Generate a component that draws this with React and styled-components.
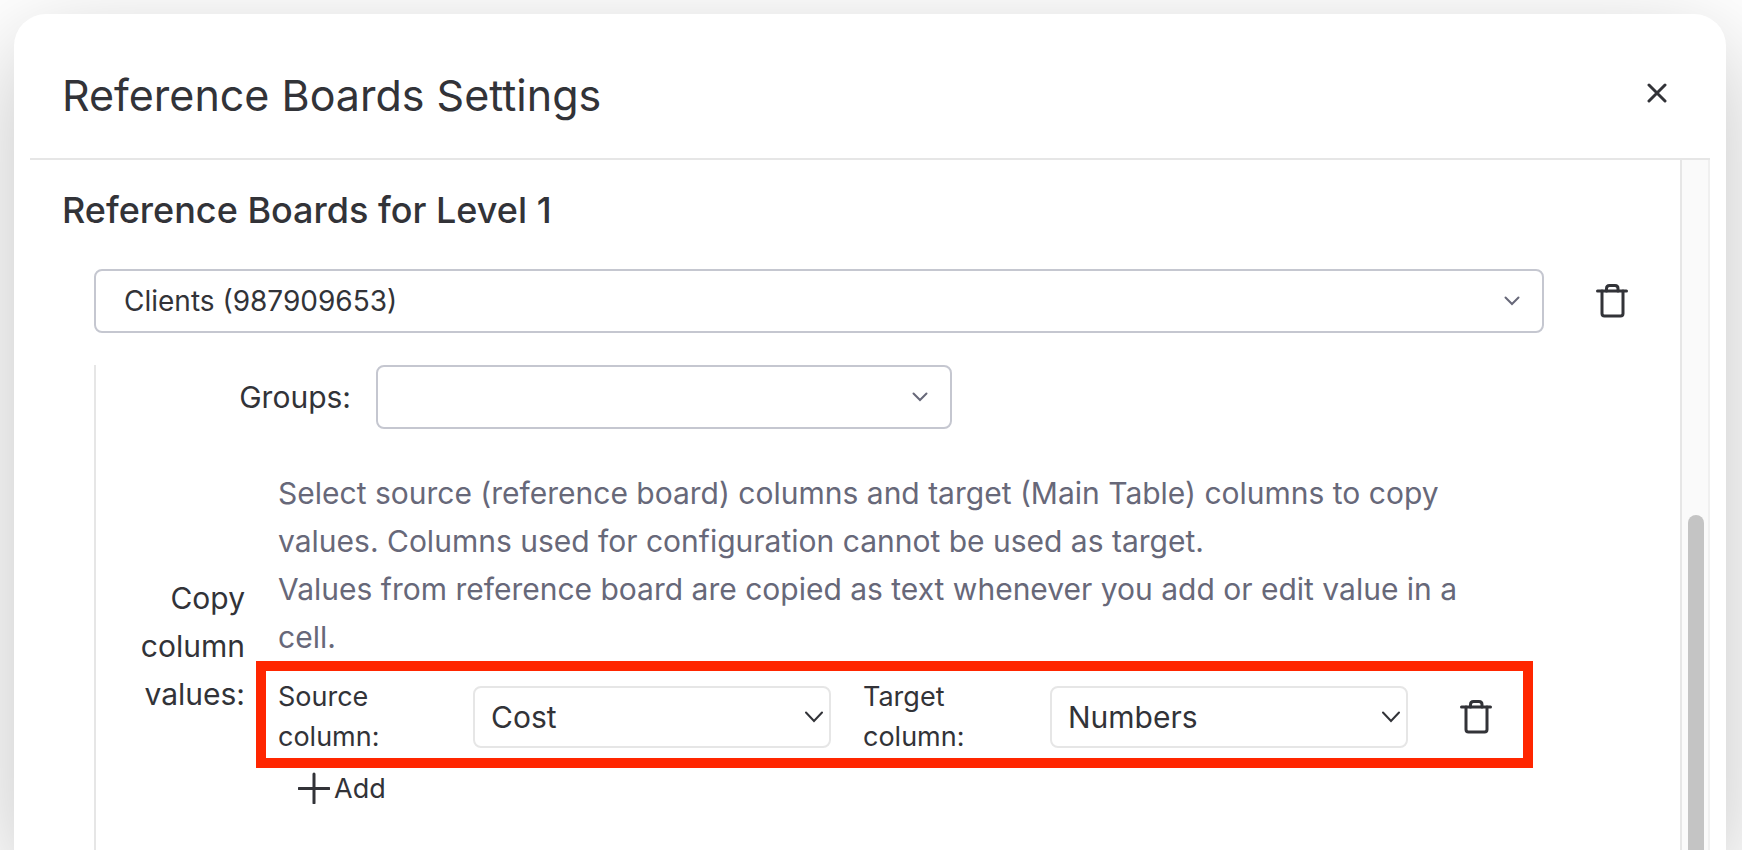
import React from 'react';
import styled, { createGlobalStyle } from 'styled-components';

function SelectBox({ id, label, value, compact }) {
  return (
    <SelectWrap>
      <Select id={id} aria-label={label} defaultValue={value} $compact={compact}>
        <option value={value}>{value}</option>
      </Select>
      <Chevron $compact={compact} viewBox="0 0 18 12" aria-hidden="true">
        {compact ? <path d="M1 1.5 L9 10 L17 1.5" /> : <path d="M2.5 2.5 L9 9 L15.5 2.5" />}
      </Chevron>
    </SelectWrap>
  );
}

function TrashButton({ label }) {
  return (
    <IconButton type="button" aria-label={label}>
      <svg width="32" height="34" viewBox="0 0 32 34" aria-hidden="true">
        <path d="M1.500 7H30.500" />
        <path d="M10.500 7V4.500Q10.500 1.500 13.500 1.500H19Q22 1.500 22 4.500V7" />
        <path d="M6 7V29.500Q6 32 8.500 32H24.500Q27 32 27 29.500V7" />
      </svg>
    </IconButton>
  );
}

function App() {
  return (
    <Page>
      <GlobalStyle />
      <Modal role="dialog" aria-labelledby="title">
        <Header>
          <Title id="title">Reference Boards Settings</Title>
          <IconButton type="button" aria-label="Close">
            <svg width="20" height="20" viewBox="0 0 20 20" aria-hidden="true">
              <path d="M2 2L18 18M18 2L2 18" />
            </svg>
          </IconButton>
        </Header>

        <Body>
          <Content>
            <SubTitle>Reference Boards for Level 1</SubTitle>

            <BoardRow>
              <SelectBox label="Reference board" value="Clients (987909653)" />
              <TrashButton label="Remove board" />
            </BoardRow>

            <BoardDetails>
              <GroupsRow>
                <GroupsLabel htmlFor="groups">Groups:</GroupsLabel>
                <SelectBox id="groups" value="" />
              </GroupsRow>

              <CopyRow>
                <CopyLabel>Copy column values:</CopyLabel>
                <div>
                  <Description>
                    Select source (reference board) columns and target (Main Table) columns to copy
                    values. Columns used for configuration cannot be used as target.
                    <br />
                    Values from reference board are copied as text whenever you add or edit value in a
                    cell.
                  </Description>

                  <Mapping>
                    <FieldLabel htmlFor="source">Source<br />column:</FieldLabel>
                    <SelectBox id="source" value="Cost" compact />
                    <span />
                    <FieldLabel htmlFor="target">Target<br />column:</FieldLabel>
                    <SelectBox id="target" value="Numbers" compact />
                    <TrashButton label="Remove mapping" />
                  </Mapping>

                  <AddButton type="button">
                    <svg width="32" height="32" viewBox="0 0 32 32" aria-hidden="true">
                      <path d="M16 2V31M1 16.500H31" />
                    </svg>
                    Add
                  </AddButton>
                </div>
              </CopyRow>
            </BoardDetails>
          </Content>

          <Track>
            <Thumb />
          </Track>
        </Body>
      </Modal>
    </Page>
  );
}

export default App


const GlobalStyle = createGlobalStyle`
  *{
    box-sizing:border-box;
  }

  body{
    margin:0;
    background:#fff;
    color:#323338;
    font-family:Inter, "Liberation Sans", sans-serif;
    font-size:30px;
    line-height:48px;
  }

  button, select{
    font-family:inherit;
    color:inherit;
  }
`

const Page = styled.div`
  display:flex;
  height:100vh;
  padding:14px 16px 0 14px;
  overflow:hidden;
`

const Modal = styled.div`
  flex:1;
  display:flex;
  flex-direction:column;
  padding:0 16px;
  border-radius:32px 32px 0 0;
  background:#fff;
  box-shadow:0 30px 100px rgba(0, 0, 0, 0.24);
`

const Header = styled.header`
  display:flex;
  align-items:center;
  justify-content:space-between;
  height:146px;
  padding:14px 43px 0 32px;
  border-bottom:2px solid #e6e6e6;
`

const Title = styled.h1`
  margin:0;
  padding-top:4px;
  font-size:43px;
  font-weight:400;
  line-height:60px;
`

const IconButton = styled.button`
  display:flex;
  padding:0;
  border:none;
  background:transparent;
  cursor:pointer;

  svg{
    fill:none;
    stroke:#323338;
    stroke-width:3;
    stroke-linecap:round;
  }
`

const Body = styled.div`
  flex:1;
  display:flex;
  min-height:0;
`

const Content = styled.div`
  flex:1;
  display:flex;
  flex-direction:column;
  padding:26px 52px 0 32px;
`

const SubTitle = styled.h2`
  margin:0 0 35px;
  font-size:36px;
  font-weight:500;
  line-height:48px;
`

const BoardRow = styled.div`
  display:grid;
  grid-template-columns:1fr 32px;
  align-items:center;
  column-gap:52px;
  padding-left:32px;
`

const SelectWrap = styled.div`
  display:grid;
  align-items:center;
`

const Select = styled.select`
  grid-area:1 / 1;
  appearance:none;
  width:100%;
  height:${props => props.$compact ? '62px' : '64px'};
  padding:0 ${props => props.$compact ? '16px' : '28px'};
  border:2px solid ${props => props.$compact ? '#e6e6e6' : '#c5c7d0'};
  border-radius:8px;
  background:#fff;
  font-size:${props => props.$compact ? '30px' : '28px'};
`

const Chevron = styled.svg`
  grid-area:1 / 1;
  justify-self:end;
  width:18px;
  height:12px;
  margin-right:${props => props.$compact ? '8px' : '23px'};
  fill:none;
  stroke:${props => props.$compact ? '#323338' : '#676879'};
  stroke-width:2;
  stroke-linecap:round;
  pointer-events:none;
`

const BoardDetails = styled.div`
  flex:1;
  margin:32px 0 0 32px;
  border-left:2px solid #e6e6e6;
`

const GroupsRow = styled.div`
  display:grid;
  grid-template-columns:255px 576px;
  align-items:center;
  column-gap:25px;
`

const GroupsLabel = styled.label`
  text-align:right;
`

const CopyRow = styled.div`
  display:grid;
  grid-template-columns:149px 1fr;
  align-items:center;
  column-gap:33px;
  margin-top:40px;
  padding-right:95px;
`

const CopyLabel = styled.div`
  padding-left:40px;
  text-align:right;
`

const Description = styled.p`
  margin:0;
  padding-right:20px;
  color:#676879;
`

const Mapping = styled.div`
  display:grid;
  grid-template-columns:195px 1fr 32px 187px 1fr 84px;
  align-items:center;
  margin-left:-22px;
  padding:6px 31px 1px 12px;
  border:10px solid #ff2600;

  ${IconButton}{
    justify-self:end;
  }
`

const FieldLabel = styled.label`
  font-size:27px;
  line-height:40px;
`

const AddButton = styled.button`
  display:flex;
  align-items:center;
  gap:4px;
  height:54px;
  padding:0 20px 14px;
  border:none;
  background:transparent;
  font-size:27px;
  cursor:pointer;

  svg{
    fill:none;
    stroke:#323338;
    stroke-width:3;
    stroke-linecap:round;
  }
`

const Track = styled.div`
  display:flex;
  flex-direction:column;
  width:30px;
  padding:355px 4px 0 6px;
  border-left:2px solid #e6e6e6;
  border-right:2px solid #f0f0f0;
  background:#fafafa;
`

const Thumb = styled.div`
  flex:1;
  border-radius:8px 8px 0 0;
  background:#c4c4c4;
`
